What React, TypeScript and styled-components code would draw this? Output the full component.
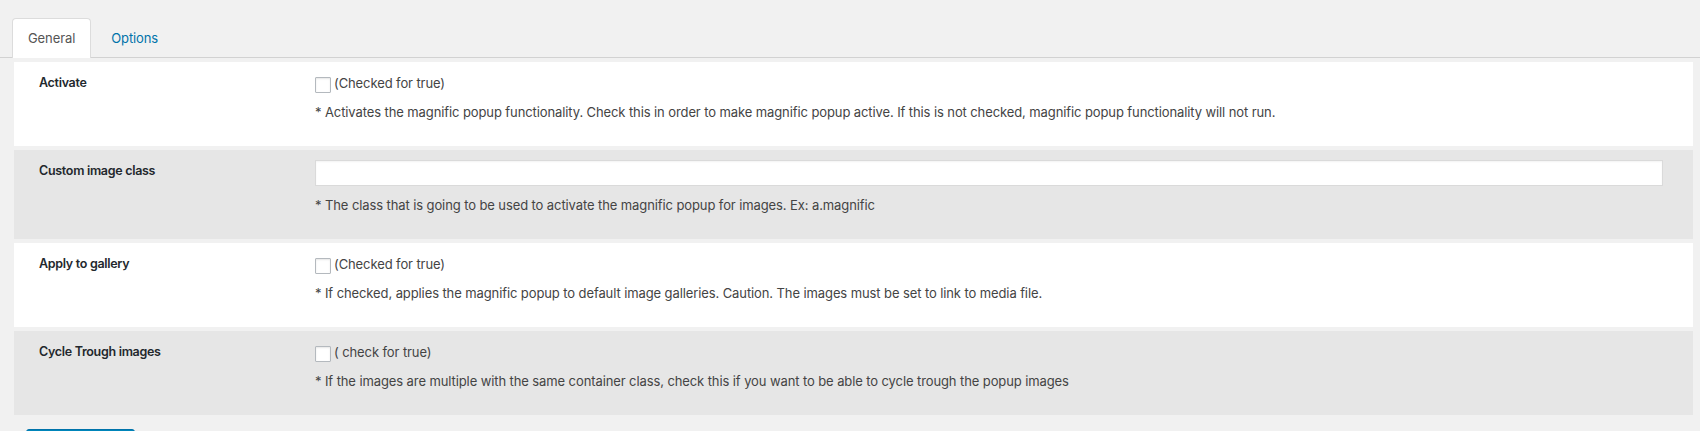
import React from "react";
import styled, { createGlobalStyle } from "styled-components";

const GlobalStyle = createGlobalStyle`
  html, body { margin: 0; padding: 0; }
  body {
    background: #f1f1f1;
    font-family: Inter, "Liberation Sans", Arial, sans-serif;
    font-size: 13px;
    letter-spacing: -0.1px;
    color: #444;
  }
`;

const Page = styled.div`
  padding-top: 18px;
`;

const TabBar = styled.nav`
  display: flex;
  align-items: flex-end;
  gap: 4px;
  padding-left: 12px;
  border-bottom: 1px solid #d2d2d2;
`;

const Tab = styled.a<{ $active?: boolean }>`
  display: block;
  box-sizing: border-box;
  height: 40px;
  padding: 0 15px;
  line-height: 38px;
  font-size: 13px;
  text-decoration: none;
  cursor: pointer;
  margin-bottom: -1px;
  border: 1px solid ${(p) => (p.$active ? "#dcdcdc" : "transparent")};
  border-bottom: none;
  border-radius: 4px 4px 0 0;
  background: ${(p) => (p.$active ? "#fff" : "transparent")};
  color: ${(p) => (p.$active ? "#555" : "#0073aa")};
`;

const Form = styled.div`
  display: flex;
  flex-direction: column;
  gap: 4px;
  margin: 4px 7px 0 14px;
`;

const Row = styled.div<{ $shade?: boolean }>`
  display: grid;
  grid-template-columns: 276px 1fr;
  padding: 12px 30px 25px 25px;
  background: ${(p) => (p.$shade ? "#e6e6e6" : "#fff")};
`;

const Label = styled.div`
  font-weight: 600;
  font-size: 12.5px;
  letter-spacing: -0.3px;
  line-height: 18px;
  color: #23282d;
`;

const Field = styled.div`
  display: flex;
  flex-direction: column;
`;

const CheckLine = styled.label`
  display: flex;
  align-items: flex-start;
  gap: 3px;
  line-height: 18px;
  color: #444;
`;

const Checkbox = styled.input.attrs({ type: "checkbox" })`
  appearance: none;
  -webkit-appearance: none;
  margin: 3px 0 0 0;
  width: 16px;
  height: 16px;
  box-sizing: border-box;
  border: 1px solid #b4b9be;
  border-radius: 1px;
  background: #fff;
  box-shadow: inset 0 1px 2px rgba(0, 0, 0, 0.1);
  flex: none;
`;

const TextInput = styled.input.attrs({ type: "text" })`
  box-sizing: border-box;
  width: 100%;
  height: 26px;
  margin: -2px 0 0 0;
  border: 1px solid #dadada;
  background: #fff;
  box-shadow: inset 0 1px 2px rgba(0, 0, 0, 0.05);
  font: inherit;
  padding: 2px 6px;
  outline: none;
`;

const Description = styled.p`
  margin: 10px 0 0 0;
  line-height: 18px;
  color: #444;
`;

const Footer = styled.div`
  padding: 14px 0 0 26px;
`;

const SaveButton = styled.button`
  display: block;
  box-sizing: border-box;
  width: 109px;
  height: 30px;
  border: 1px solid #0073aa;
  border-radius: 3px;
  background: #0085ba;
`;

type Setting = {
  label: string;
  kind: "checkbox" | "text";
  checkText?: string;
  description: string;
};

const settings: Setting[] = [
  {
    label: "Activate",
    kind: "checkbox",
    checkText: "(Checked for true)",
    description:
      "* Activates the magnific popup functionality. Check this in order to make magnific popup active. If this is not checked, magnific popup functionality will not run.",
  },
  {
    label: "Custom image class",
    kind: "text",
    description:
      "* The class that is going to be used to activate the magnific popup for images. Ex: a.magnific",
  },
  {
    label: "Apply to gallery",
    kind: "checkbox",
    checkText: "(Checked for true)",
    description:
      "* If checked, applies the magnific popup to default image galleries. Caution. The images must be set to link to media file.",
  },
  {
    label: "Cycle Trough images",
    kind: "checkbox",
    checkText: "( check for true)",
    description:
      "* If the images are multiple with the same container class, check this if you want to be able to cycle trough the popup images",
  },
];

export default function App() {
  return (
    <>
      <GlobalStyle />
      <Page>
        <TabBar>
          <Tab $active>General</Tab>
          <Tab>Options</Tab>
        </TabBar>
        <Form>
          {settings.map((s, i) => (
            <Row key={s.label} $shade={i % 2 === 1}>
              <Label>{s.label}</Label>
              <Field>
                {s.kind === "checkbox" ? (
                  <CheckLine>
                    <Checkbox />
                    <span>{s.checkText}</span>
                  </CheckLine>
                ) : (
                  <TextInput />
                )}
                <Description>{s.description}</Description>
              </Field>
            </Row>
          ))}
        </Form>
        <Footer>
          <SaveButton aria-label="Save Changes" />
        </Footer>
      </Page>
    </>
  );
}
